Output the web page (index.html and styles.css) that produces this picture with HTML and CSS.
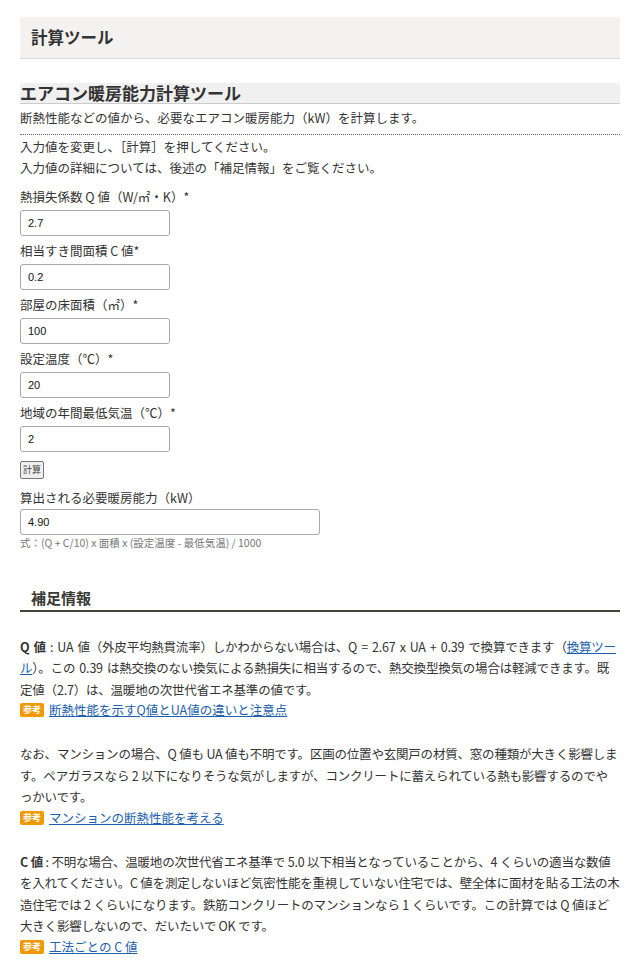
FILE: index.html
```html
<!DOCTYPE html>
<html lang="ja">
<head>
<meta charset="utf-8">
<title>計算ツール</title>
<link rel="stylesheet" href="styles.css">
</head>
<body>
<div class="page">
  <header class="page-head"><h1>計算ツール</h1></header>

  <section class="tool">
    <h2 class="tool-title">エアコン暖房能力計算ツール</h2>
    <p class="tool-desc">断熱性能などの値から、必要なエアコン暖房能力（kW）を計算します。</p>
    <p class="tool-note">入力値を変更し、［計算］を押してください。<br>入力値の詳細については、後述の「補足情報」をご覧ください。</p>

    <form class="form">
      <div class="field">
        <label>熱損失係数 Q 値（W/㎡・K）*</label>
        <input class="inp" type="text" value="2.7">
      </div>
      <div class="field">
        <label>相当すき間面積 C 値*</label>
        <input class="inp" type="text" value="0.2">
      </div>
      <div class="field">
        <label>部屋の床面積（㎡）*</label>
        <input class="inp" type="text" value="100">
      </div>
      <div class="field">
        <label>設定温度（℃）*</label>
        <input class="inp" type="text" value="20">
      </div>
      <div class="field">
        <label>地域の年間最低気温（℃）*</label>
        <input class="inp" type="text" value="2">
      </div>
      <div class="btn-row"><button type="button" class="btn">計算</button></div>
      <div class="field result">
        <label>算出される必要暖房能力（kW）</label>
        <input class="inp wide" type="text" value="4.90">
        <p class="formula">式：(Q + C/10) x 面積 x (設定温度 - 最低気温) / 1000</p>
      </div>
    </form>
  </section>

  <section class="info">
    <h3 class="info-title">補足情報</h3>
    <p class="para first"><b>Q 値</b> : UA 値（外皮平均熱貫流率）しかわからない場合は、Q = 2.67 x UA + 0.39 で換算できます（<a href="#">換算ツール</a>）。この 0.39 は熱交換のない換気による熱損失に相当するので、熱交換型換気の場合は軽減できます。既定値（2.7）は、温暖地の次世代省エネ基準の値です。</p>
    <p class="ref"><span class="badge">参考</span><a href="#">断熱性能を示すQ値とUA値の違いと注意点</a></p>

    <p class="para">なお、マンションの場合、Q 値も UA 値も不明です。区画の位置や玄関戸の材質、窓の種類が大きく影響します。ペアガラスなら 2 以下になりそうな気がしますが、コンクリートに蓄えられている熱も影響するのでやっかいです。</p>
    <p class="ref"><span class="badge">参考</span><a href="#">マンションの断熱性能を考える</a></p>

    <p class="para"><b>C 値</b> : 不明な場合、温暖地の次世代省エネ基準で 5.0 以下相当となっていることから、4 くらいの適当な数値を入れてください。C 値を測定しないほど気密性能を重視していない住宅では、壁全体に面材を貼る工法の木造住宅では 2 くらいになります。鉄筋コンクリートのマンションなら 1 くらいです。この計算では Q 値ほど大きく影響しないので、だいたいで OK です。</p>
    <p class="ref"><span class="badge">参考</span><a href="#">工法ごとの C 値</a></p>
  </section>
</div>
</body>
</html>
```

FILE: styles.css
```css
* { box-sizing: border-box; }
html, body { margin: 0; padding: 0; background: #fff; }
body {
  font-family: "Noto Sans CJK JP", "Noto Sans", sans-serif;
  color: #333;
  font-size: 13px;
}
.page { padding: 17px 19px 0 20px; }

.page-head {
  background: #f3f2f1;
  border-bottom: 1px solid #ddd;
  height: 42px;
  display: flex;
  align-items: center;
  padding-left: 11px;
}
.page-head h1 { margin: 0; font-size: 16.5px; font-weight: bold; color: #333; line-height: 1; }

.tool { margin-top: 24px; }
.tool-title {
  margin: 0;
  font-size: 17px;
  line-height: 19px;
  height: 21px;
  font-weight: bold;
  color: #333;
  background: #f0f0f0;
  border-bottom: 1px solid #ccc;
}
.tool-desc {
  margin: 0;
  padding: 4px 0 6px;
  line-height: 20px;
  font-size: 12.5px;
  border-bottom: 1px dotted #666;
}
.tool-note { margin: 0; padding-top: 1px; line-height: 21px; font-size: 12.5px; }

.form { margin-top: 10px; }
.field { display: flex; flex-direction: column; align-items: flex-start; margin-bottom: 6px; }
.field label { font-size: 12.5px; line-height: 18px; margin-bottom: 4px; }
.inp {
  width: 150px;
  height: 26px;
  border: 1px solid #aaa;
  border-radius: 3px;
  padding: 0 7px;
  font-family: "Liberation Sans", Arial, sans-serif;
  font-size: 11px;
  color: #111;
  background: #fff;
}
.inp.wide { width: 300px; }
.btn-row { margin-top: 3px; margin-bottom: 10px; }
.btn {
  font-family: "Noto Sans CJK JP", sans-serif;
  font-size: 9px;
  line-height: 13px;
  padding: 1px 2px;
  border: 1px solid #777;
  border-radius: 2px;
  background: #efefef;
  color: #444;
  height: 18px;
}
.result label { margin-bottom: 2px; }
.formula {
  margin: 1px 0 0;
  font-size: 10.5px;
  color: #777;
  line-height: 14px;
}

.info { margin-top: 37px; }
.info-title {
  margin: 0;
  padding: 0 0 1px 11px;
  font-size: 15px;
  line-height: 22px;
  font-weight: bold;
  color: #3a3a35;
  border-bottom: 2px solid #44443c;
}
.para {
  margin: 0;
  padding-top: 23px;
  font-size: 12.5px;
  line-height: 21.5px;
  color: #333;
  letter-spacing: -0.2px;
}
.para.first { padding-top: 24px; word-spacing: 1.5px; }
.para b { font-weight: bold; }
a { color: #1d5fb0; text-decoration: underline; }
.ref { margin: 0; display: flex; align-items: center; gap: 5px; font-size: 12.5px; line-height: 20px; }
.badge {
  background: #f39800;
  color: #fff;
  font-size: 9px;
  line-height: 14px;
  padding: 0 3px;
  border-radius: 2px;
  font-weight: bold;
}
```
